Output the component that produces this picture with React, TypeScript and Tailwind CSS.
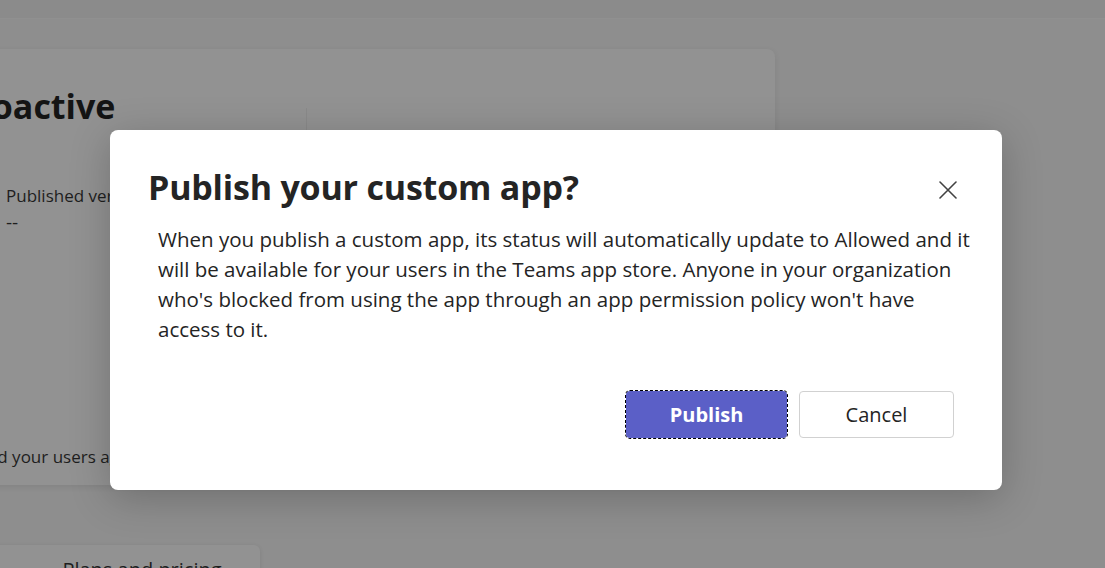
export default function App() {
  return (
    <div className="relative w-[1105px] h-[568px] overflow-hidden bg-[#8e8e8e] font-['Open_Sans',sans-serif]">
      <div className="h-[19px] bg-[#8b8b8b] border-b border-[#909090]" />
      <div className="flex flex-col gap-[60px] pt-[30px]">
        <div className="ml-[-60px] w-[835px] h-[436px] rounded-[8px] bg-[#929292] shadow-[0_2px_6px_rgba(0,0,0,0.08)] pl-[66px] pt-[35px]">
          <div className="flex">
            <div className="w-[300px] flex flex-col">
              <h1 className="ml-[-51px] text-[34px] font-bold text-[#141414] leading-[44px] whitespace-nowrap">
                Proactive
              </h1>
              <div className="mt-[55px] text-[17px] text-[#1e1e1e] leading-[26px] whitespace-nowrap">
                Published version
              </div>
              <div className="text-[19px] text-[#1e1e1e] leading-[26px]">--</div>
              <div className="mt-[209px] ml-[-108px] text-[17px] text-[#1e1e1e] leading-[26px] whitespace-nowrap">
                Microsoft and your users agree
              </div>
            </div>
            <div className="mt-[24px] w-px h-[300px] bg-[#8a8a8a]" />
          </div>
        </div>
        <div className="ml-[-40px] w-[300px] h-[50px] rounded-[6px] bg-[#929292] shadow-[0_1px_4px_rgba(0,0,0,0.1)] flex justify-center pt-[10px] pl-[64px]">
          <span className="text-[20px] text-[#1e1e1e]">Plans and pricing</span>
        </div>
      </div>

      <div className="absolute left-[110px] top-[130px] w-[892px] h-[360px] rounded-[8px] bg-white shadow-[0_8px_40px_rgba(0,0,0,0.22)] pl-[38px] pr-[48px] pt-[34px]">
        <div className="flex items-start justify-between">
          <h2 className="text-[34px] font-bold text-[#242424] leading-[46px] tracking-[-0.2px]">
            Publish your custom app?
          </h2>
          <button className="mt-[17px] mr-[-3px] text-[#424242]">
            <svg width="18" height="18" viewBox="0 0 18 18" fill="none">
              <path d="M1 1L17 17M17 1L1 17" stroke="currentColor" strokeWidth="1.6" strokeLinecap="round" />
            </svg>
          </button>
        </div>
        <p className="mt-[14px] pl-[10px] text-[20.5px] text-[#242424] leading-[30px] w-[830px]">
          When you publish a custom app, its status will automatically update to Allowed and it
          will be available for your users in the Teams app store. Anyone in your organization
          who's blocked from using the app through an app permission policy won't have access to it.
        </p>
        <div className="mt-[47px] flex justify-end gap-[12px]">
          <button className="w-[161px] h-[47px] rounded-[4px] bg-[#5b5fc7] text-white text-[20px] font-bold outline outline-1 outline-dashed outline-black">
            Publish
          </button>
          <button className="w-[155px] h-[47px] rounded-[4px] border border-[#d1d1d1] bg-white text-[#242424] text-[20px]">
            Cancel
          </button>
        </div>
      </div>
    </div>
  );
}
